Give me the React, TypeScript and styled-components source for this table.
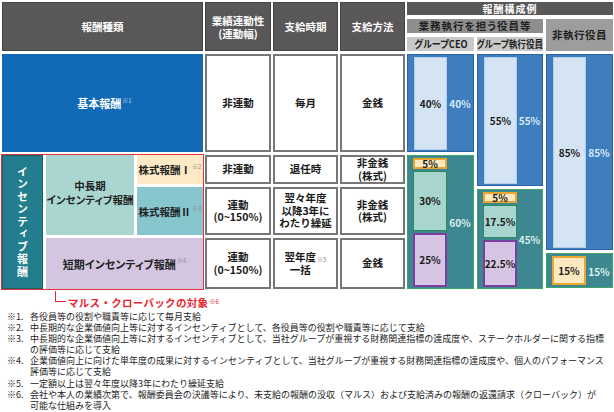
import React from 'react';
import styled, { createGlobalStyle } from 'styled-components';

const GlobalStyle = createGlobalStyle`
  * { box-sizing: border-box; }
  body {
    margin: 0;
    background: #fff;
    font-family: "Noto Sans CJK JP", "Noto Sans", sans-serif;
    color: #1a1a1a;
  }
`;

type SegKind = 'stock1' | 'stock2' | 'short';

interface Seg {
  kind: SegKind;
  h: number;
  v: string;
}

interface ChartColumn {
  blueH: number;
  bluePct: string;
  tealH: number;
  tealPct: string;
  segs: Seg[];
}

const chartColumns: ChartColumn[] = [
  {
    blueH: 98,
    bluePct: '40%',
    tealH: 134,
    tealPct: '60%',
    segs: [
      { kind: 'stock1', h: 11, v: '5%' },
      { kind: 'stock2', h: 60, v: '30%' },
      { kind: 'short', h: 54, v: '25%' },
    ],
  },
  {
    blueH: 132,
    bluePct: '55%',
    tealH: 100,
    tealPct: '45%',
    segs: [
      { kind: 'stock1', h: 11, v: '5%' },
      { kind: 'stock2', h: 33, v: '17.5%' },
      { kind: 'short', h: 47, v: '22.5%' },
    ],
  },
  {
    blueH: 196,
    bluePct: '85%',
    tealH: 35,
    tealPct: '15%',
    segs: [{ kind: 'stock1', h: 29, v: '15%' }],
  },
];

const notes: { no: string; lines: string[] }[] = [
  { no: '※1.', lines: ['各役員等の役割や職責等に応じて毎月支給'] },
  { no: '※2.', lines: ['中長期的な企業価値向上等に対するインセンティブとして、各役員等の役割や職責等に応じて支給'] },
  {
    no: '※3.',
    lines: [
      '中長期的な企業価値向上等に対するインセンティブとして、当社グループが重視する財務関連指標の達成度や、ステークホルダーに関する指標',
      'の評価等に応じて支給',
    ],
  },
  {
    no: '※4.',
    lines: [
      '企業価値向上に向けた単年度の成果に対するインセンティブとして、当社グループが重視する財務関連指標の達成度や、個人のパフォーマンス',
      '評価等に応じて支給',
    ],
  },
  { no: '※5.', lines: ['一定額以上は翌々年度以降3年にわたり繰延支給'] },
  {
    no: '※6.',
    lines: [
      '会社や本人の業績次第で、報酬委員会の決議等により、未支給の報酬の没収（マルス）および支給済みの報酬の返還請求（クローバック）が',
      '可能な仕組みを導入',
    ],
  },
];

const App: React.FC = () => {
  return (
    <>
      <GlobalStyle />
      <Page>
        <Table>
          <HeadCell>報酬種類</HeadCell>
          <HeadCell>
            業績連動性
            <br />
            (連動幅)
          </HeadCell>
          <HeadCell>支給時期</HeadCell>
          <HeadCell>支給方法</HeadCell>

          <ChartHead>
            <ChartTitle>報酬構成例</ChartTitle>
            <ExecHead>業務執行を担う役員等</ExecHead>
            <NonExecHead>非執行役員</NonExecHead>
            <RoleHead>
              <Narrow>グループCEO</Narrow>
            </RoleHead>
            <RoleHead>
              <Narrow $scale={0.86}>グループ執行役員</Narrow>
            </RoleHead>
          </ChartHead>

          <BasicPay>
            基本報酬<Sup $light>※1</Sup>
          </BasicPay>
          <Cell>非連動</Cell>
          <Cell>毎月</Cell>
          <Cell>金銭</Cell>

          <Incentive>
            <IncentiveLabel>インセンティブ報酬</IncentiveLabel>
            <LongTerm>
              中長期
              <br />
              インセンティブ報酬
            </LongTerm>
            <Kind $bg="#fde9c5">
              株式報酬Ⅰ<Sup>※2</Sup>
            </Kind>
            <Kind $bg="#87c6cc">
              株式報酬Ⅱ<Sup>※3</Sup>
            </Kind>
            <ShortTerm>
              短期インセンティブ報酬<Sup>※4</Sup>
            </ShortTerm>
          </Incentive>

          <Cell>非連動</Cell>
          <Cell>退任時</Cell>
          <Cell>
            非金銭
            <br />
            (株式)
          </Cell>

          <Cell>
            連動
            <br />
            (0~150%)
          </Cell>
          <Cell>
            翌々年度
            <br />
            以降3年に
            <br />
            わたり繰延
          </Cell>
          <Cell>
            非金銭
            <br />
            (株式)
          </Cell>

          <Cell>
            連動
            <br />
            (0~150%)
          </Cell>
          <Cell>
            翌年度
            <br />
            一括<Sup>※5</Sup>
          </Cell>
          <Cell>金銭</Cell>

          <Chart>
            {chartColumns.map((c, i) => (
              <ChartCol key={i}>
                <BluePanel style={{ height: c.blueH }}>
                  <BlueBar>{c.bluePct}</BlueBar>
                  <PanelLabel $color="#dce9f7">{c.bluePct}</PanelLabel>
                </BluePanel>
                <TealPanel style={{ height: c.tealH }}>
                  <SegStack>
                    {c.segs.map((s, j) => (
                      <Segment key={j} $kind={s.kind} style={{ height: s.h }}>
                        {s.v}
                      </Segment>
                    ))}
                  </SegStack>
                  <PanelLabel $color="#dcefee">{c.tealPct}</PanelLabel>
                </TealPanel>
              </ChartCol>
            ))}
          </Chart>
        </Table>

        <Callout>
          <Bracket />
          <CalloutText>
            マルス・クローバックの対象<Sup $red>※6</Sup>
          </CalloutText>
        </Callout>

        <Notes>
          {notes.map((n) => (
            <Note key={n.no}>
              <NoteNo>{n.no}</NoteNo>
              <NoteText>
                {n.lines.map((l, k) => (
                  <div key={k}>{l}</div>
                ))}
              </NoteText>
            </Note>
          ))}
        </Notes>
      </Page>
    </>
  );
};

const Page = styled.div`
  width: 614px;
  height: 412px;
  padding: 2px 0 0 2px;
  overflow: hidden;
`;

const Table = styled.div`
  display: grid;
  grid-template-columns: 201px 66px 65px 65px 206px;
  grid-template-rows: 49px 98px 29px 48px 51px;
  column-gap: 2px;
  row-gap: 3px;
`;

const HeadCell = styled.div`
  display: flex;
  align-items: center;
  justify-content: center;
  text-align: center;
  background: #595757;
  border: 1px solid #444;
  color: #fff;
  font-size: 10.5px;
  font-weight: 700;
  line-height: 13px;
`;

const ChartHead = styled.div`
  display: grid;
  grid-template-columns: 67px 66px 67px;
  grid-template-rows: 13px 14px 14px;
  column-gap: 3px;
  row-gap: 4px;
  font-size: 10px;
  font-weight: 700;
  line-height: 1;
  font-feature-settings: "palt";
`;

const ChartTitle = styled.div`
  grid-column: 1 / 4;
  display: flex;
  align-items: center;
  justify-content: center;
  background: #595757;
  color: #fff;
  letter-spacing: 1px;
`;

const ExecHead = styled.div`
  grid-column: 1 / 3;
  display: flex;
  align-items: center;
  justify-content: center;
  background: #8e8e8e;
  color: #1e1e1e;
  font-size: 10.5px;
  letter-spacing: 1px;
`;

const NonExecHead = styled.div`
  grid-column: 3;
  grid-row: 2 / 4;
  display: flex;
  align-items: center;
  justify-content: center;
  background: #9d9d9d;
  color: #1e1e1e;
  font-size: 10.5px;
  letter-spacing: 0.5px;
`;

const RoleHead = styled.div`
  display: flex;
  align-items: center;
  justify-content: center;
  background: #c9c9c9;
  color: #1e1e1e;
  overflow: hidden;
  white-space: nowrap;
`;

const Narrow = styled.span<{ $scale?: number }>`
  display: inline-block;
  transform: scaleX(${(p) => p.$scale ?? 0.92});
  font-size: 10px;
`;

const BasicPay = styled.div`
  display: flex;
  align-items: center;
  justify-content: center;
  background: #116ab5;
  color: #fff;
  font-size: 11px;
  font-weight: 700;
  padding-left: 4px;
`;

const Sup = styled.span<{ $light?: boolean; $red?: boolean }>`
  font-size: 6px;
  font-weight: 400;
  position: relative;
  top: -3px;
  margin-left: 1px;
  color: ${(p) => (p.$light ? '#b9d0ea' : p.$red ? '#e8262f' : '#8a8a8a')};
`;

const Cell = styled.div`
  display: flex;
  align-items: center;
  justify-content: center;
  text-align: center;
  background: #fff;
  border: 2px solid #767676;
  font-size: 10.5px;
  font-weight: 700;
  line-height: 12.5px;
  color: #1a1a1a;
`;

const Incentive = styled.div`
  grid-column: 1;
  grid-row: 3 / span 3;
  display: grid;
  grid-template-columns: 41px 88px 66px;
  grid-template-rows: 29px 48px 51px;
  gap: 3px;
  outline: 1.5px solid #e8303a;
  outline-offset: 0.5px;
  font-size: 10.5px;
  font-weight: 700;
  color: #222;
  font-feature-settings: "palt";
`;

const IncentiveLabel = styled.div`
  grid-row: 1 / 4;
  display: flex;
  align-items: center;
  justify-content: center;
  background: #227d8d;
  border: 1px solid #17606c;
  color: #fff;
  font-size: 11px;
  writing-mode: vertical-rl;
  letter-spacing: 1.5px;
`;

const LongTerm = styled.div`
  grid-column: 2;
  grid-row: 1 / 3;
  display: flex;
  align-items: center;
  justify-content: center;
  text-align: center;
  background: #a9d6d1;
  line-height: 14px;
  padding-bottom: 4px;
  white-space: nowrap;
`;

const Kind = styled.div<{ $bg: string }>`
  display: flex;
  align-items: center;
  justify-content: center;
  background: ${(p) => p.$bg};
  white-space: nowrap;
`;

const ShortTerm = styled.div`
  grid-column: 2 / 4;
  display: flex;
  align-items: center;
  justify-content: center;
  background: #d4c6e1;
  font-size: 11px;
`;

const Chart = styled.div`
  grid-column: 5;
  grid-row: 2 / span 4;
  display: grid;
  grid-template-columns: 67px 66px 67px;
  column-gap: 3px;
`;

const ChartCol = styled.div`
  display: flex;
  flex-direction: column;
  gap: 3px;
`;

const BluePanel = styled.div`
  display: flex;
  align-items: stretch;
  background: #3e7ebe;
  border: 1px solid #2b61a3;
  padding: 2px 0 1px 6px;
`;

const BlueBar = styled.div`
  width: 33px;
  display: flex;
  align-items: center;
  justify-content: center;
  background: #d4e4f4;
  border: 1px solid #b3cde8;
  font-size: 10px;
  font-weight: 700;
  color: #1a1a1a;
`;

const PanelLabel = styled.div<{ $color: string }>`
  flex: 1;
  display: flex;
  align-items: center;
  justify-content: center;
  font-size: 10px;
  font-weight: 700;
  color: ${(p) => p.$color};
`;

const TealPanel = styled.div`
  display: flex;
  align-items: stretch;
  background: #3c8790;
  border: 1px solid #3ca566;
  padding: 2px 0 1px 5px;
`;

const SegStack = styled.div`
  width: 34px;
  display: flex;
  flex-direction: column;
  gap: 2px;
`;

const segColors: Record<SegKind, { bg: string; bd: string; w: number }> = {
  stock1: { bg: '#fde9c0', bd: '#eaa631', w: 2 },
  stock2: { bg: '#a8d5ce', bd: '#2c8a5c', w: 1 },
  short: { bg: '#d6c5e2', bd: '#7c3f9d', w: 2 },
};

const Segment = styled.div<{ $kind: SegKind }>`
  display: flex;
  align-items: center;
  justify-content: center;
  background: ${(p) => segColors[p.$kind].bg};
  border: ${(p) => segColors[p.$kind].w}px solid ${(p) => segColors[p.$kind].bd};
  font-size: 10px;
  font-weight: 700;
  line-height: 1;
  color: #1a1a1a;
`;

const Callout = styled.div`
  display: flex;
  align-items: flex-start;
  padding-left: 53px;
  margin-top: 2px;
  height: 20px;
`;

const Bracket = styled.span`
  width: 11px;
  height: 11px;
  border-left: 1.5px solid #e8262f;
  border-bottom: 1.5px solid #e8262f;
`;

const CalloutText = styled.span`
  margin: 5px 0 0 2px;
  font-size: 10.5px;
  line-height: 13px;
  font-weight: 700;
  color: #e8262f;
  letter-spacing: 0.3px;
`;

const Notes = styled.div`
  padding-left: 5px;
  font-size: 9px;
  line-height: 11.1px;
  color: #222;
`;

const Note = styled.div`
  display: flex;
  white-space: nowrap;
`;

const NoteNo = styled.span`
  width: 23px;
  flex-shrink: 0;
`;

const NoteText = styled.div``;

export default App;
